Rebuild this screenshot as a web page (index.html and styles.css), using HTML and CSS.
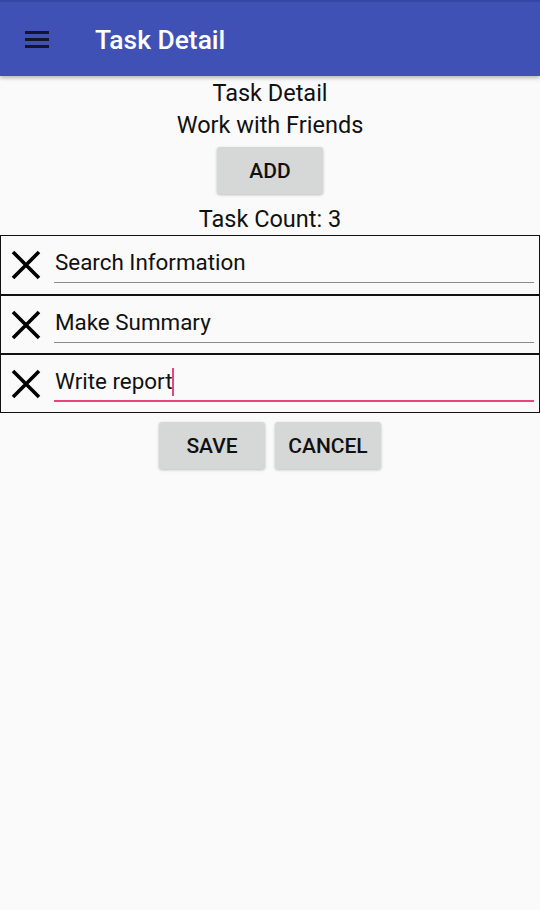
FILE: index.html
```html
<!DOCTYPE html>
<html>
<head>
<meta charset="utf-8">
<link rel="stylesheet" href="styles.css">
</head>
<body>
<header class="appbar">
  <div class="menu">
    <svg width="24" height="24" viewBox="0 0 24 24"><path d="M0 5.5h24M0 12.5h24M0 19.5h24" stroke="#15152a" stroke-width="3"/></svg>
  </div>
  <div class="title">Task Detail</div>
</header>
<main class="content">
  <div class="heading">Task Detail</div>
  <div class="heading">Work with Friends</div>
  <button class="btn add">ADD</button>
  <div class="count">Task Count: 3</div>
  <div class="list">
    <div class="row">
      <svg class="x" width="30" height="30" viewBox="0 0 30 30"><path d="M2 2L28 28M28 2L2 28" stroke="#000" stroke-width="3.6"/></svg>
      <div class="field"><span class="txt">Search Information</span></div>
    </div>
    <div class="row">
      <svg class="x" width="30" height="30" viewBox="0 0 30 30"><path d="M2 2L28 28M28 2L2 28" stroke="#000" stroke-width="3.6"/></svg>
      <div class="field"><span class="txt">Make Summary</span></div>
    </div>
    <div class="row">
      <svg class="x" width="30" height="30" viewBox="0 0 30 30"><path d="M2 2L28 28M28 2L2 28" stroke="#000" stroke-width="3.6"/></svg>
      <div class="field active"><span class="txt">Write report</span><span class="cursor"></span></div>
    </div>
  </div>
  <div class="actions">
    <button class="btn">SAVE</button>
    <button class="btn">CANCEL</button>
  </div>
</main>
</body>
</html>
```
FILE: styles.css
```css
* { box-sizing: border-box; }
html, body { margin: 0; padding: 0; }
body {
  background: #fafafa;
  font-family: Roboto, "Liberation Sans", sans-serif;
  color: #111;
  width: 540px;
  height: 910px;
  overflow: hidden;
}
.appbar {
  height: 76px;
  background: #3f51b5;
  border-top: 2px solid #3446a6;
  display: flex;
  align-items: center;
  box-shadow: 0 2px 4px rgba(0,0,0,0.28);
  position: relative;
  z-index: 1;
}
.menu {
  width: 24px;
  height: 24px;
  margin-left: 25px;
  display: flex;
}
.title {
  margin-left: 46px;
  color: #fff;
  font-size: 26.4px;
  font-weight: 500;
  margin-top: 2px;
}
.content {
  display: flex;
  flex-direction: column;
  align-items: center;
  padding-top: 1px;
}
.heading {
  font-size: 23.5px;
  line-height: 32px;
  color: #111;
}
.btn {
  font-family: Roboto, "Liberation Sans", sans-serif;
  font-size: 21px;
  font-weight: 500;
  color: #111;
  background: #d6d7d7;
  border: none;
  border-radius: 3px;
  height: 47px;
  width: 106px;
  box-shadow: 0 1px 3px rgba(0,0,0,0.25);
  padding: 0;
}
.add { margin-top: 6px; }
.count {
  font-size: 23.5px;
  line-height: 32px;
  margin-top: 9px;
}
.list {
  width: 540px;
  display: flex;
  flex-direction: column;
}
.row {
  height: 59px;
  border: 1px solid #111;
  display: flex;
  align-items: flex-start;
}
.row:first-child { height: 60px; }
.x {
  margin-left: 10px;
  margin-top: 14px;
  flex: none;
}
.field {
  margin-left: 13px;
  margin-right: 5px;
  flex: 1;
  height: 47px;
  border-bottom: 1px solid #8a8a8a;
  display: flex;
  align-items: flex-end;
  padding-bottom: 6px;
  padding-left: 1px;
  font-size: 22.4px;
  color: #111;
}
.field.active {
  border-bottom: 2px solid #e8457f;
  padding-bottom: 5px;
}
.txt { line-height: 27px; }
.cursor {
  display: inline-block;
  width: 2px;
  height: 28px;
  background: #e8457f;
  margin-bottom: -1px;
}
.actions {
  display: flex;
  gap: 10px;
  margin-top: 9px;
}
```
